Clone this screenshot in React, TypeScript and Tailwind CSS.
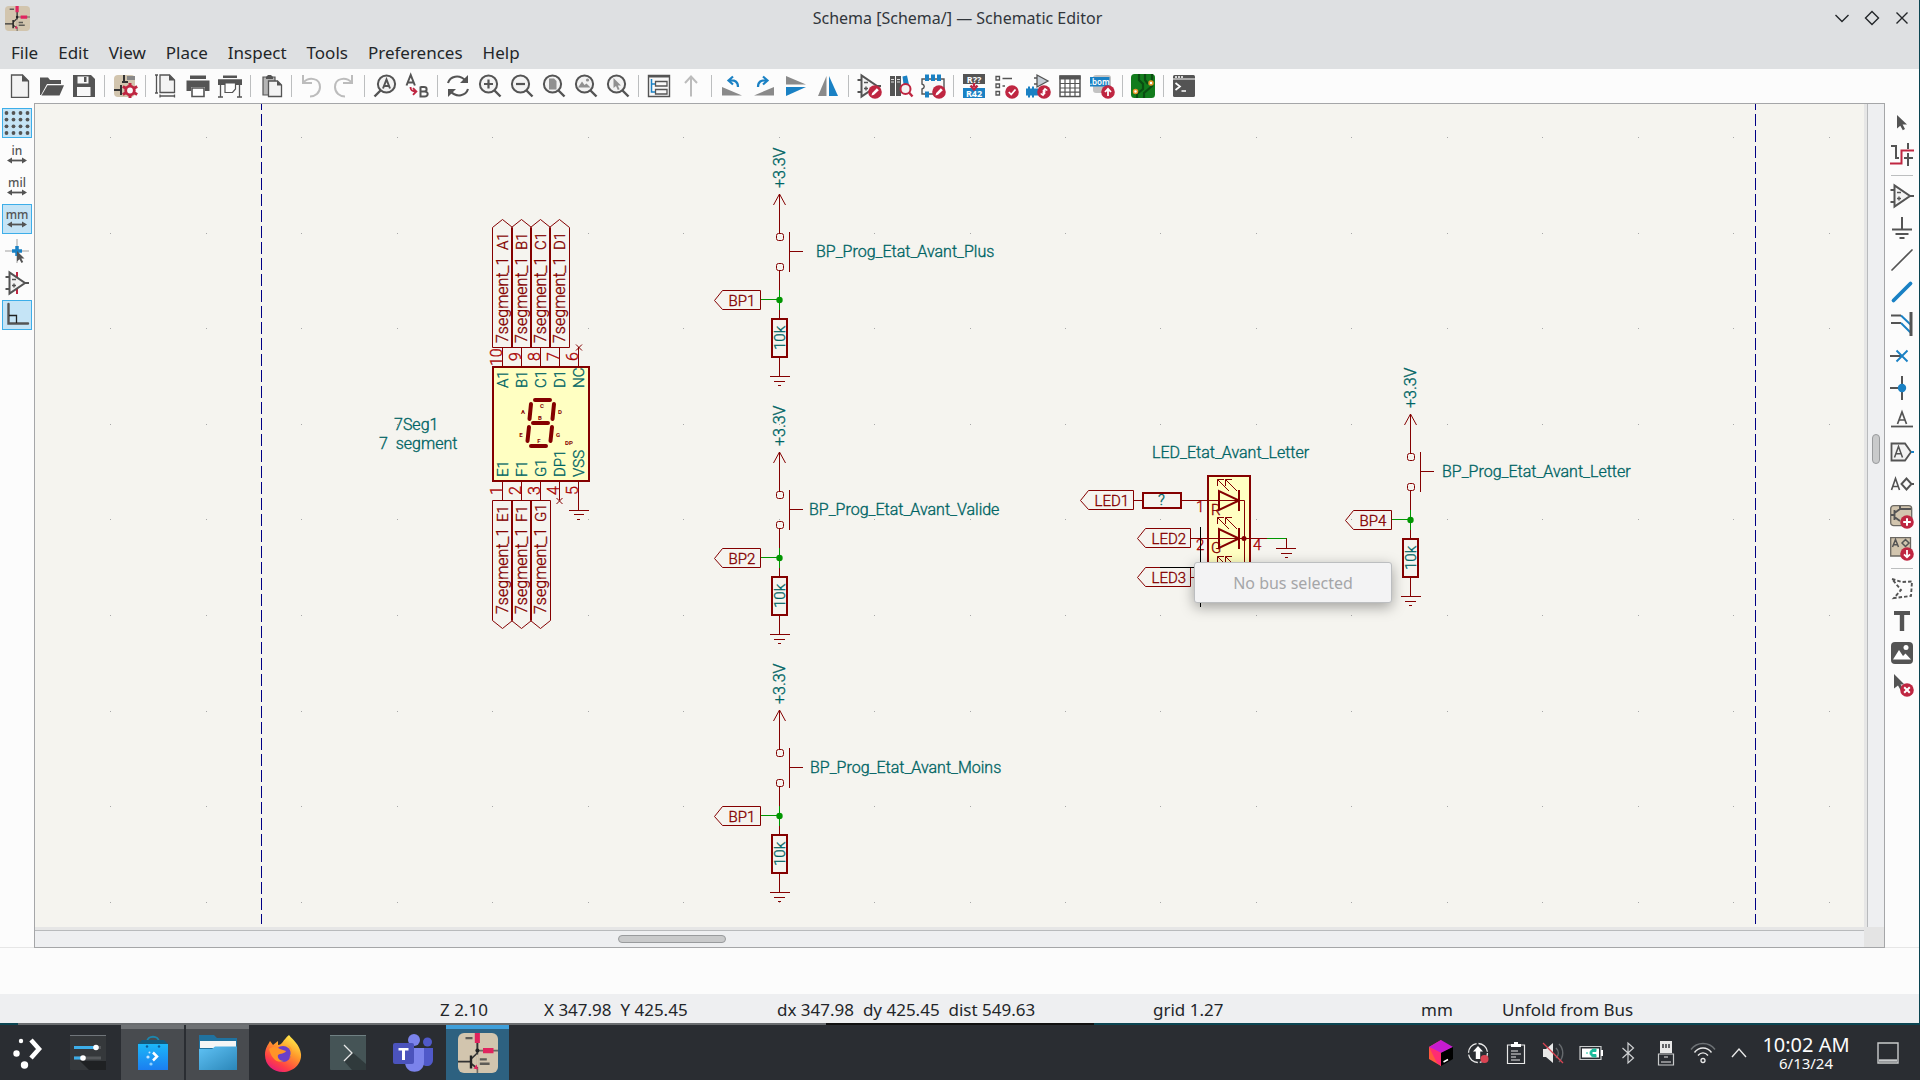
import React from "react";
import type { ReactNode } from "react";

const G = "#545454";
const B = "#1a81c4";
const R = "#bf2641";
const MAROON = "#840000";
const TEAL = "#006464";
const PIN = "#a90000";
const GREEN = "#009600";

type Item = { label: string; art: ReactNode; active?: boolean } | "sep";

function Art({ children, size = 24, box = 24 }: { children: ReactNode; size?: number; box?: number }) {
  return (
    <svg width={size} height={size} viewBox={`0 0 ${box} ${box}`} fill="none" className="block shrink-0 overflow-visible" aria-hidden="true">
      {children}
    </svg>
  );
}

function Magnifier({ children }: { children?: ReactNode }) {
  return (
    <Art>
      <circle cx="10.5" cy="10" r="8.6" fill="#f3f3f3" stroke={G} strokeWidth="2" />
      <path d="M16.5 16.5 22.5 22.5" stroke={G} strokeWidth="2.4" />
      {children}
    </Art>
  );
}

function Badge({ children, cx = 18, cy = 18 }: { children: ReactNode; cx?: number; cy?: number }) {
  return (
    <g transform={`translate(${cx} ${cy})`}>
      <circle r="6.8" fill={R} />
      {children}
    </g>
  );
}

const pencil = <path d="M-3.5 3.500-2.800 1 1.800-3.800 3.800-1.800-1 2.800Z" fill="#fff" />;

function AppGlyph() {
  return (
    <>
      <rect width="40" height="40" rx="6" fill="#d2c5ae" />
      <path d="M19.4 9V40M19.4 17.6H40" stroke="#6b6862" strokeWidth="1.6" />
      <path d="M19.4 9V20L13 26M0 28.6H13M13 30.5 19.4 35.5" stroke="#333" strokeWidth="1.7" />
      <path d="M19.4 21.8V34" stroke="#d2c5ae" strokeWidth="2.4" />
      <path d="M13 22.5V35.5" stroke="#222" strokeWidth="2.4" />
      <circle cx="19.4" cy="17.6" r="2" fill="#222" />
      <path d="M16.8 0H21.9V10H16.8ZM25 15H35.5V20.2H25ZM20.2 36.5 15.4 35.4 18.6 31.4Z" fill="#e0245e" />
      <path d="M7.5 4H14.5V6.3H7.5ZM21.8 25.3H28.8V27.6H21.8ZM21.8 29.6H31.6V32H21.8Z" fill="#5d5b56" />
    </>
  );
}

function OpAmp() {
  return (
    <>
      <path d="M4.5 1.5V22.5L20 12Z" fill="#f3f3f3" stroke={G} strokeWidth="2" />
      <path d="M0.5 6H4M0.5 18H4M20 12H24" stroke={G} strokeWidth="2" />
      <path d="M7 8.5H11M7 14.5H11M9 12.5V16.5" stroke={G} strokeWidth="1.4" />
    </>
  );
}

const topItems: Item[] = [
  { label: "New", art: <Art><path d="M3.5 1H14.5L20.5 7V23.3H3.5Z" fill="#f3f3f3" stroke={G} strokeWidth="1.3" /><path d="M14 .5 21 7.5H14Z" fill={G} /></Art> },
  { label: "Open", art: <Art><path d="M0 21V3.5H8L10 6H21V10H7L1 21Z" fill={G} /><path d="M1.5 21.5 7.5 11.2H24L19.5 21.5Z" fill={G} /></Art> },
  { label: "Save", art: <Art><path d="M1 1H19L23 5V23H1Z" fill={G} /><path d="M5.5 2.5H16.5V9.5H5.5ZM5 13H18.5V22H5Z" fill="#f8f8f8" /><path d="M12 3H14.5V8H12Z" fill={G} /></Art> },
  "sep",
  { label: "Schematic Setup", art: <Art><rect x="1" y="1" width="21" height="22" rx="4" fill="#d2c5ae" /><path d="M11 1V8M9 8H15M1 16H8M8 11V21" stroke="#333" strokeWidth="2" /><path d="M14 2H22V6H14Z" fill="#888" /><path d="M17 9V24M9.8 12.5 24.2 20.5M9.8 20.5 24.2 12.5" stroke={R} strokeWidth="3" /><circle cx="17" cy="16.5" r="4.3" fill="#f8f8f8" stroke={R} strokeWidth="2.8" /></Art> },
  "sep",
  { label: "Page Settings", art: <Art><path d="M6 1H15.5L20.500 6V18.500H6Z" fill="#f3f3f3" stroke={G} strokeWidth="1.3" /><path d="M15 .5 21 6.500H15Z" fill={G} /><path d="M2.500 1V19M1 1H4M1 19H4M6 22H20.500M6 20.500V23.500M20.500 20.500V23.500" stroke={G} strokeWidth="1.3" /></Art> },
  { label: "Print", art: <Art><path d="M4 1.5H20V5H4ZM0.5 6.5H23.5V17H19V13H5V17H.5Z" fill={G} /><path d="M6 14H18V22.5H6Z" fill="#fff" stroke={G} strokeWidth="1.6" /></Art> },
  { label: "Plot", art: <Art><path d="M5 1.5H19V4H5ZM0 5.2H24V11H0Z" fill={G} /><path d="M7 9H17.5V15L14.5 18.5H7Z" fill="#fff" stroke={G} strokeWidth="1.2" /><path d="M2.5 10V22.5M21.5 10V22.5M0 23H5M19 23H24" stroke={G} strokeWidth="1.3" /></Art> },
  "sep",
  { label: "Paste", art: <Art><path d="M4 3H16V21H4Z" fill="#b5b5b5" stroke={G} strokeWidth="1.2" /><path d="M7 3 9 1H12L14 3V5H7Z" fill={G} /><path d="M9.500 7H18.500L22.500 11V22.500H9.500Z" fill="#f3f3f3" stroke={G} strokeWidth="1.3" /><path d="M18 6.500 23 11.500H18Z" fill={G} /></Art> },
  "sep",
  { label: "Undo", art: <Art><path d="M3 1V9H12M3.500 8.500C9 2.500 20 4 20 13C20 19 15 22.500 10 22.500" stroke="#bcbcbc" strokeWidth="2" /></Art> },
  { label: "Redo", art: <Art><path d="M20 1V9H11M19.5 8.5C14 2.5 3 4 3 13C3 19 8 22.5 13 22.5" stroke="#bcbcbc" strokeWidth="2" /></Art> },
  "sep",
  { label: "Find", art: <Art><circle cx="13.5" cy="10" r="8.6" fill="#f3f3f3" stroke={G} strokeWidth="2" /><path d="M7.5 16.5 1.5 22.5" stroke={G} strokeWidth="2.4" /><path d="M10 14.5 13.5 5.5 17 14.5M11 12H16" stroke={G} strokeWidth="2" /></Art> },
  { label: "Find and Replace", art: <Art><path d="M1.5 11.5 5.7 1 9.9 11.5M3 8.5H8.5" stroke={G} strokeWidth="2" /><path d="M15.5 13H19C22.5 13 22.5 17.5 19 17.5H15.5M19.5 17.5C24 17.5 23.5 22.5 19.5 22.5H15.5V12.5" stroke={G} strokeWidth="2" /><path d="M5.5 13C5.5 16.5 7 17.5 11 17.5M8 14.2 11.3 17.5 8 20.8" stroke={R} strokeWidth="1.9" /></Art> },
  "sep",
  { label: "Refresh", art: <Art><path d="M2 9C4 2.5 13-.5 20 7M22 15C20 21.500 11 24.500 4 17" stroke={G} strokeWidth="2.1" /><path d="M22 1V9H14ZM2 23V15H10Z" fill={G} /></Art> },
  { label: "Zoom In", art: <Magnifier><path d="M6 10H15M10.500 5.500V14.500" stroke={G} strokeWidth="2.2" /></Magnifier> },
  { label: "Zoom Out", art: <Magnifier><path d="M6 10H15" stroke={G} strokeWidth="2.2" /></Magnifier> },
  { label: "Zoom to Fit", art: <Magnifier><path d="M7 4.500H12L14.500 7V15.500H7Z" fill="#909090" /></Magnifier> },
  { label: "Zoom to Objects", art: <Magnifier><path d="M4 13.500 8 7.500 10.500 11 12.500 9.500 16.500 13.500Z" fill="#909090" /><circle cx="13.500" cy="6" r="1.600" fill="#909090" /></Magnifier> },
  { label: "Zoom to Selection", art: <Magnifier><path d="M7.500 4V14L10 12 11.800 16 13.600 15.200 11.800 11.500H15Z" fill="#909090" /></Magnifier> },
  "sep",
  { label: "Hierarchy Navigator", art: <Art><path d="M1.500 1.500H22.500V22.500H1.500Z" fill="#f8f8f8" stroke={G} strokeWidth="1.400" /><path d="M1 1H23V3.500H1Z" fill={G} /><path d="M8.500 7.500H20V12H8.500ZM8.500 15.500H20V20H8.500Z" stroke={G} strokeWidth="1.300" /><path d="M4.500 5V18H8M4.500 10H8" stroke={B} strokeWidth="1.500" /></Art> },
  { label: "Leave Sheet", art: <Art><path d="M12 22.500V2.500M6 9 12 2.500 18 9" stroke="#bcbcbc" strokeWidth="2" /></Art> },
  "sep",
  { label: "Rotate Counterclockwise", art: <Art><path d="M2 13V21.500H22Z" fill="#8a8a8a" /><path d="M18 13C18 8 15 5.500 9 6.500M13 2.500 8.500 6.500 13 10.500" stroke={B} strokeWidth="2.200" /></Art> },
  { label: "Rotate Clockwise", art: <Art><path d="M22 13V21.500H2Z" fill="#8a8a8a" /><path d="M6 13C6 8 9 5.500 15 6.500M11 2.500 15.500 6.500 11 10.500" stroke={B} strokeWidth="2.200" /></Art> },
  { label: "Mirror Vertically", art: <Art><path d="M2 2V10.500H22Z" fill="#8a8a8a" /><path d="M2 22V13H22Z" fill={B} /></Art> },
  { label: "Mirror Horizontally", art: <Art><path d="M2 22H10.500V2Z" fill="#8a8a8a" /><path d="M22 22H13V2Z" fill={B} /></Art> },
  "sep",
  { label: "Symbol Editor", art: <Art><OpAmp /><Badge>{pencil}</Badge></Art> },
  { label: "Symbol Library Browser", art: <Art><path d="M1 2H6V22H1ZM7 2H12V22H7Z" fill={G} /><path d="M2 5.500H5M2 8H5M8 5.500H11M8 8H11" stroke="#ddd" strokeWidth="1" /><path d="M13.500 2.500 18 1.500 20.500 13 15 14Z" fill={B} /><circle cx="16.500" cy="15" r="5" fill="#f3f3f3" stroke={R} strokeWidth="2" /><path d="M20 18.500 23.500 22.500" stroke={R} strokeWidth="2.400" /></Art> },
  { label: "Footprint Editor", art: <Art><path d="M1 5H23V20H1V15C4 14 4 11 1 10Z" fill="#f8f8f8" stroke={G} strokeWidth="1.400" /><path d="M4 .5H8V7H4ZM10 .5H14V7H10ZM16 .5H20V7H16ZM4 17.500H8V23.500H4Z" fill={B} /><Badge>{pencil}</Badge></Art> },
  "sep",
  { label: "Annotate", art: <Art><path d="M1 0H23V10H1Z" fill={G} /><path d="M1 14H23V24H1Z" fill={B} /><path d="M12 9V13M8.500 11.500 12 15.500 15.500 11.500" stroke={R} strokeWidth="2.400" /><text x="12" y="8.500" textAnchor="middle" fontSize="9" fontWeight="700" fill="#fff">R??</text><text x="12" y="22.500" textAnchor="middle" fontSize="9" fontWeight="700" fill="#fff">R42</text></Art> },
  { label: "Electrical Rules Check", art: <Art><path d="M2 2.500H5.500V6H2ZM2 10H5.500V13.500H2ZM2 17.500H5.500V21H2ZM8.500 4.500H18M8.500 12H11" stroke={G} strokeWidth="1.300" /><Badge><path d="M-3.200 0-.8 2.500 3.500-2.500" stroke="#fff" strokeWidth="1.800" /></Badge></Art> },
  { label: "Assign Footprints", art: <Art><path d="M11 1V13L22 7Z" fill="#c5cdd5" stroke={G} strokeWidth="1.300" /><path d="M8 4H11M8 10H11" stroke={G} strokeWidth="1.300" /><path d="M0 14.500H12V21.500H0ZM2 12.500H4V23.500H2ZM6 12.500H8V23.500H6Z" fill={B} /><Badge><path d="M-3.300 1.500-1 3.300 1.200.5M3.300-1.500 1-3.300-1.200-.5M-1.500 1.500 1.500-1.500" stroke="#fff" strokeWidth="1.400" /></Badge></Art> },
  { label: "Symbol Fields Table", art: <Art><path d="M2 2H22V22.500H2Z" fill="#fff" stroke={G} strokeWidth="1.500" /><path d="M1.500 1.500H22.500V5.500H1.500Z" fill={G} /><path d="M7 5V22M12 5V22M17 5V22M2 9.500H22M2 14H22M2 18.200H22" stroke={G} strokeWidth="1.200" /></Art> },
  { label: "Generate Bill of Materials", art: <Art><rect x="3" y="1" width="18" height="18" rx="3" fill="#c3c3c3" /><path d="M0 3H19.500V12.500H0Z" fill={B} /><text x="9.700" y="10.500" textAnchor="middle" fontSize="8" fontWeight="600" fill="#fff">.bom</text><Badge><path d="M0 4V-3M-3 0 0-3.200 3 0" stroke="#fff" strokeWidth="1.800" /></Badge></Art> },
  "sep",
  { label: "Switch to PCB Editor", art: <Art><rect x="0" y="0" width="24" height="24" rx="3.500" fill="#127c1c" /><path d="M8 0V6L12 10V15L6 20V24M14 0V6L17 10M13 24V19L21 12V0" stroke="#0b4d12" strokeWidth="2.200" /><circle cx="4.500" cy="17.500" r="2" fill="#fff" stroke="#e8952a" strokeWidth="1.500" /><circle cx="20" cy="9" r="2" fill="#fff" stroke="#e8952a" strokeWidth="1.500" /></Art> },
  "sep",
  { label: "Scripting Console", art: <Art><rect x="1" y="1" width="22" height="22" rx="1.500" fill={G} /><path d="M1 5H23" stroke="#fff" strokeWidth="1" /><path d="M3 3H5M6 3H8M9 3H11" stroke="#fff" strokeWidth="1.300" /><path d="M3.500 9 8 12.500 3.500 16M9.500 17H14" stroke="#fff" strokeWidth="1.700" /></Art> },
];

function Unit({ name }: { name: string }) {
  return (
    <Art>
      <text x="12" y="12" textAnchor="middle" fontSize="12" fontWeight="500" fill={G}>{name}</text>
      <path d="M4 17.500H20" stroke={G} strokeWidth="1.800" />
      <path d="M2 17.500 7 14.500V20.500ZM22 17.500 17 14.500V20.500Z" fill={G} />
    </Art>
  );
}

const leftItems: Item[] = [
  {
    label: "Show Grid",
    active: true,
    art: (
      <Art>
        {[1.5, 8.5, 15.5, 22.5].flatMap((x) => [2, 8.600, 15.300, 22].map((y) => <circle key={`${x}-${y}`} cx={x} cy={y} r="1.900" fill={G} />))}
      </Art>
    ),
  },
  { label: "Inches", art: <Unit name="in" /> },
  { label: "Mils", art: <Unit name="mil" /> },
  { label: "Millimeters", active: true, art: <Unit name="mm" /> },
  { label: "Full-Window Crosshairs", art: <Art><path d="M0 12H24M12 0V24" stroke="#a0a0a0" strokeWidth="1" /><path d="M7 12H17M12 7V17" stroke={B} strokeWidth="3.500" /><path d="M12 12V22.500L14.500 20.300 16.500 24 18.200 23 16.300 19.600H19.500Z" fill={G} /></Art> },
  { label: "Show Hidden Pins", art: <Art><path d="M12 1V6M12 18V23" stroke={R} strokeWidth="2" /><OpAmp /></Art> },
  { label: "Orthogonal Lines", active: true, art: <Art><path d="M3.500 1V20.500H23" stroke={G} strokeWidth="2.400" strokeLinecap="round" /><path d="M4 12.500H11.500V20" stroke="#222" strokeWidth="1.300" /></Art> },
];

const rightItems: Item[] = [
  { label: "Select", art: <Art><path d="M7 4V17.500L10.300 14.700 12.800 19.200 15 18 12.600 13.600H17Z" fill={G} /></Art> },
  { label: "Highlight Net", art: <Art><path d="M1 3H6V15H9M18 0V6M14 15H23M18 10V23" stroke={G} strokeWidth="2" /><path d="M0 20.500H11.500V7.500H24" stroke={R} strokeWidth="2" /></Art> },
  "sep",
  { label: "Place Symbol", art: <Art><OpAmp /></Art> },
  { label: "Place Power", art: <Art><path d="M12 1V13M2 13.500H22M5.500 18H18.500M9.500 22H14.500" stroke={G} strokeWidth="2" /></Art> },
  { label: "Draw Wire", art: <Art><path d="M2 22 22 2" stroke={G} strokeWidth="1.700" strokeLinecap="round" /></Art> },
  { label: "Draw Bus", art: <Art><path d="M3.500 20.500 20.500 3.500" stroke={B} strokeWidth="3.800" strokeLinecap="round" /></Art> },
  { label: "Wire to Bus Entry", art: <Art><path d="M1 3.500H11M1 11H11" stroke={G} strokeWidth="2" /><path d="M11 3.500 21 13M11 11 21 21" stroke={B} strokeWidth="2" /><path d="M21 0V24" stroke={G} strokeWidth="3" /></Art> },
  { label: "No Connect", art: <Art><path d="M0 12H12" stroke={G} strokeWidth="2" /><path d="M6.500 6.500 17.500 17.500M6.500 17.500 17.500 6.500" stroke={B} strokeWidth="1.900" /></Art> },
  { label: "Junction", art: <Art><path d="M0 12H12M12 0V24" stroke={G} strokeWidth="2" /><circle cx="12" cy="12" r="4.200" fill={B} /></Art> },
  { label: "Net Label", art: <Art><path d="M7.500 16 12 4 16.500 16M9 12H15" stroke={G} strokeWidth="1.700" /><path d="M1 18.500H23" stroke={G} strokeWidth="1.800" /></Art> },
  { label: "Global Label", art: <Art><path d="M1.500 3.500H15L21 12 15 20.500H1.500Z" fill="#f3f3f3" stroke={G} strokeWidth="1.800" /><path d="M4.500 17.500 8.500 6.500 12.500 17.500M6 13.800H11" stroke={G} strokeWidth="1.500" /><path d="M21 12H24" stroke={B} strokeWidth="2" /></Art> },
  { label: "Hierarchical Label", art: <Art><path d="M1.500 18 5.500 6.500 9.500 18M3 14.500H8" stroke={G} strokeWidth="1.600" /><path d="M11.500 12 16.500 6.500 21.500 12 16.500 17.500ZM21.500 12H24" stroke={G} strokeWidth="1.900" /></Art> },
  { label: "Add Sheet", art: <Art><rect x=".7" y="1.700" width="21" height="20" rx="3" fill="#d2c5ae" stroke="#6b6862" strokeWidth="1.300" /><path d="M4.500 6V16M1 11H4.500M4.500 9 10 5V2M4.500 13 10 17M10 5H21" stroke={G} strokeWidth="1.900" /><Badge cx={17}><path d="M-3.800 0H3.800M0-3.800V3.800" stroke="#fff" strokeWidth="2" /></Badge></Art> },
  { label: "Import Sheet Pin", art: <Art><path d="M.7 1.700H20.500V20H.7Z" fill="#d2c5ae" stroke="#6b6862" strokeWidth="1.300" /><path d="M2.500 11 5.500 3.500 8.500 11M3.500 8.700H7.500M12 7 15.500 3.500 19 7 15.500 10.500Z" stroke={G} strokeWidth="1.500" /><Badge cx={17} cy={18}><path d="M0-4V3M-3 .3 0 3.300 3 .3" stroke="#fff" strokeWidth="1.800" /></Badge></Art> },
  "sep",
  { label: "Draw Lines", art: <Art><path d="M2 2 12 5 22 4.500 21 19 4 21 11 13 2 2" stroke={G} strokeWidth="1.900" strokeDasharray="3.500 2" /></Art> },
  { label: "Place Text", art: <Art><path d="M4 2H20V6H14.200V22H9.800V6H4Z" fill={G} /></Art> },
  { label: "Place Image", art: <Art><rect x="1" y="1" width="22" height="22" rx="4" fill={G} /><path d="M3 18.500 9 9 13 15 15.500 12.500 21 18.500Z" fill="#fff" /><circle cx="16" cy="6.500" r="2.500" fill="#fff" /></Art> },
  { label: "Delete", art: <Art><path d="M4 1V15.500L8 12.500 10.500 17 13 15.500 10.500 11.500H14.500Z" fill={G} /><Badge cx={17} cy={17}><path d="M-2.800-2.800 2.800 2.800M-2.800 2.800 2.800-2.800" stroke="#fff" strokeWidth="2" /></Badge></Art> },
];

function ToolButton({ item }: { item: Exclude<Item, "sep"> }) {
  return (
    <button
      type="button"
      aria-label={item.label}
      className={
        item.active
          ? "m-px flex size-[30px] shrink-0 items-center justify-center border border-[#3daee9] bg-[#c5e4f6]"
          : "m-px flex size-[30px] shrink-0 items-center justify-center border border-transparent"
      }
    >
      {item.art}
    </button>
  );
}

type LabelProps = { x: number; y: number; fill?: string; size?: number; children: ReactNode };

function H({ x, y, fill = TEAL, size = 16, children }: LabelProps) {
  return (
    <text x={x} y={y} fontSize={size} fill={fill} stroke={fill} strokeWidth="0.35">
      {children}
    </text>
  );
}

function V({ x, y, fill = TEAL, size = 16, children }: LabelProps) {
  return (
    <text transform={`translate(${x} ${y}) rotate(-90)`} fontSize={size} fill={fill} stroke={fill} strokeWidth="0.35">
      {children}
    </text>
  );
}

function Tag({ x, y, w, name }: { x: number; y: number; w: number; name: string }) {
  return (
    <g>
      <path d={`M${x} ${y}l8-10h${w - 8}v19h-${w - 8}Z`} stroke={MAROON} fill="none" />
      <H x={x + 14} y={y + 5} size={15} fill={MAROON}>{name}</H>
    </g>
  );
}

function PushButton({ dx, dy, tag, name, tx }: { dx: number; dy: number; tag: string; name: string; tx: number }) {
  return (
    <g transform={`translate(${dx} ${dy})`}>
      <V x={785} y={188}>+3.3V</V>
      <g stroke={MAROON} fill="none">
        <path d="M779.5 194V233M773.500 205 779.500 194 785.500 205M789.500 232V272M789.500 251.500H803M779.500 271V290M779.500 310V318M779.500 358V376" />
        <rect x="776.500" y="233.500" width="7" height="7" rx="2" />
        <rect x="776.500" y="263.500" width="7" height="7" rx="2" />
        <path d="M770 376.500H790M774 381.500H785M778 385.500H781" />
        <rect x="772" y="319" width="15" height="38" strokeWidth="2" />
      </g>
      <path d="M761 299.500H779.500M779.500 290V310" stroke={GREEN} />
      <circle cx="779.500" cy="300" r="3.200" fill={GREEN} />
      <V x={785} y={350} size={15}>10k</V>
      <Tag x={714.5} y={300.5} w={46} name={tag} />
      <H x={tx} y={257}>{name}</H>
    </g>
  );
}

function Diode({ dy }: { dy: number }) {
  return (
    <g transform={`translate(0 ${dy})`} stroke={MAROON} fill="none">
      <path d="M1229 491 1217.500 479.500M1237 491 1225.500 479.500M1217.500 486V479.500H1224M1225.500 486V479.500H1232" />
      <path d="M1219 491V510L1239 500.500ZM1239 490V511" strokeWidth="2" />
    </g>
  );
}

const topPins = [
  { x: 502.500, n: "10", name: "A1" },
  { x: 521.500, n: "9", name: "B1" },
  { x: 540.500, n: "8", name: "C1" },
  { x: 559.500, n: "7", name: "D1" },
  { x: 578.500, n: "6", name: "NC" },
];
const bottomPins = [
  { x: 502.500, n: "1", name: "E1" },
  { x: 521.500, n: "2", name: "F1" },
  { x: 540.500, n: "3", name: "G1" },
  { x: 559.500, n: "4", name: "DP1" },
  { x: 578.500, n: "5", name: "VSS" },
];
const segmentMarks: [string, number, number][] = [
  ["A", 523, 414], ["C", 542, 408], ["D", 560, 414], ["B", 540, 420],
  ["E", 521, 437], ["G", 558, 437], ["F", 539, 443], ["DP", 569, 445],
];

function SevenSegment() {
  return (
    <g>
      <rect x="493" y="367" width="96" height="114" fill="#ffffc2" stroke={MAROON} strokeWidth="2" />
      {topPins.map((p, i) => (
        <g key={p.n}>
          <path d={`M${p.x} 347V366`} stroke={MAROON} />
          <V x={p.x - 1} y={i === 0 ? 366 : 361} fill={PIN}>{p.n}</V>
          <V x={p.x + 5} y={388} size={15}>{p.name}</V>
          {i < 4 && (
            <>
              <path d={`M${p.x - 10} 347.500V227.500L${p.x} 219.500 ${p.x + 10} 227.500V347.500Z`} stroke={MAROON} fill="none" />
              <V x={p.x + 5} y={343} fill={MAROON}>7segment_1</V>
              <V x={p.x + 5} y={250} fill={MAROON} size={15}>{p.name}</V>
            </>
          )}
        </g>
      ))}
      {bottomPins.map((p, i) => (
        <g key={p.n}>
          <path d={`M${p.x} 482V500`} stroke={MAROON} />
          <V x={p.x - 1} y={495} fill={PIN}>{p.n}</V>
          <V x={p.x + 5} y={477} size={15}>{p.name}</V>
          {i < 3 && (
            <>
              <path d={`M${p.x - 10} 500.500V620.500L${p.x} 628.500 ${p.x + 10} 620.500V500.500Z`} stroke={MAROON} fill="none" />
              <V x={p.x + 5} y={614} fill={MAROON}>7segment_1</V>
              <V x={p.x + 5} y={522} fill={MAROON} size={15}>{p.name}</V>
            </>
          )}
        </g>
      ))}
      <path d="M576 344.500 582 350.500M576 350.500 582 344.500M556.500 498 562.500 504M556.500 504 562.500 498M578.500 500V510M569 510.500H589M574 514.500H584M577 519.500H580" stroke={MAROON} />
      <g stroke={MAROON} strokeWidth="4" strokeLinecap="round">
        <path d="M535 400H550M533 423H548M531 446H546M531 404 529.500 419M554 404 552.500 419M529 427 527.500 441M552 427 550.500 441" />
      </g>
      {segmentMarks.map(([t, x, y]) => (
        <text key={t} x={x} y={y} fontSize="6" fontWeight="700" textAnchor="middle" fill={MAROON}>{t}</text>
      ))}
      <H x={394} y={430}>7Seg1</H>
      <H x={379} y={449}>7&nbsp; segment</H>
    </g>
  );
}

function LedArray() {
  return (
    <g>
      <rect x="1208" y="476" width="42" height="120" fill="#ffffc2" stroke={MAROON} strokeWidth="2" />
      <Diode dy={0} />
      <Diode dy={38} />
      <Diode dy={77} />
      <g stroke={MAROON} fill="none">
        <path d="M1134 500.500H1143M1182 500.500H1244.500V596M1191 538.500H1267M1191 577.500H1208M1286.500 538V548M1276 548.500H1296M1281 553.500H1292M1285 557.500H1288" />
        <rect x="1143" y="493" width="38" height="15" strokeWidth="2" />
      </g>
      <circle cx="1244" cy="538.500" r="2.500" fill={MAROON} />
      <path d="M1267 538.500H1286.500" stroke={GREEN} />
      <H x={1196} y={512} size={15} fill={PIN}>1</H>
      <H x={1196} y={550} size={15} fill={PIN}>2</H>
      <H x={1253} y={550} size={15} fill={PIN}>4</H>
      <H x={1211} y={515} size={15} fill={MAROON}>R</H>
      <H x={1211} y={553} size={15} fill={MAROON}>G</H>
      <H x={1158} y={505} size={15}>?</H>
      <H x={1152} y={458}>LED_Etat_Avant_Letter</H>
      <Tag x={1080.500} y={500.500} w={53} name="LED1" />
      <Tag x={1137.500} y={538.500} w={53} name="LED2" />
      <Tag x={1137.500} y={577.500} w={53} name="LED3" />
      <path d="M1200.500 527V607M1160 567.500H1240" stroke="#000" />
    </g>
  );
}

const gridX = Array.from({ length: 30 }, (_, i) => Math.round(15 + i * 95.45));
const gridY = Array.from({ length: 14 }, (_, i) => Math.round(137 + i * 95.600));

function Schematic() {
  return (
    <svg className="absolute inset-0 size-full font-['Roboto',sans-serif] font-light" role="img" aria-label="Schematic sheet">
      <g transform="translate(-35 -104)">
        {gridX.flatMap((x) => gridY.map((y) => <rect key={`${x}-${y}`} x={x} y={y} width="1" height="1" fill="#a8a8a8" />))}
        <path d="M261.500 104V924M1755.500 104V924" stroke="#000084" strokeDasharray="12 4" strokeDashoffset="6" />
        <SevenSegment />
        <PushButton dx={0} dy={0} tag="BP1" name="BP_Prog_Etat_Avant_Plus" tx={816} />
        <PushButton dx={0} dy={258} tag="BP2" name="BP_Prog_Etat_Avant_Valide" tx={809} />
        <PushButton dx={0} dy={516} tag="BP1" name="BP_Prog_Etat_Avant_Moins" tx={810} />
        <PushButton dx={631} dy={220} tag="BP4" name="BP_Prog_Etat_Avant_Letter" tx={811} />
        <LedArray />
      </g>
    </svg>
  );
}

const tasks: { label: string; tone: string; art: ReactNode }[] = [
  { label: "System Settings", tone: "", art: <Art size={36} box={36}><rect x="0" y="0" width="36" height="35" rx="1" fill="#35383b" /><path d="M0 .5H36" stroke="#70757a" /><path d="M10 26 36 26V35H19Z" fill="#1f2123" /><path d="M4 12.500H31M4 23H31" stroke="#55585b" strokeWidth="3" /><path d="M4 12.500H25M4 23H13" stroke="#3daee9" strokeWidth="3" /><circle cx="26" cy="12.500" r="2.800" fill="#fff" /><circle cx="13" cy="23" r="2.800" fill="#fff" /></Art> },
  { label: "Discover", tone: "open", art: <Art size={36} box={36}><path d="M12 11V7C12 0 24 0 24 7V11" stroke="#1c86ad" strokeWidth="1.800" /><path d="M3 9H33V35H3Z" fill="url(#store)" /><path d="M3 9 7 5H29L33 9Z" fill="#145a7d" /><circle cx="12" cy="11.500" r="1.200" fill="#0c5e9b" /><circle cx="24" cy="11.500" r="1.200" fill="#0c5e9b" /><path d="M18 17.500 22 21.500 18 25.500" stroke="#fff" strokeWidth="2.500" /><circle cx="13" cy="22" r="1.600" fill="#c5e5ff" /><circle cx="14.500" cy="17.500" r="1" fill="#c5e5ff" /><circle cx="16" cy="29" r="1.600" fill="#8fd0ff" /><defs><linearGradient id="store" x1="0" y1="0" x2="0" y2="1"><stop stopColor="#1cb7f8" /><stop offset="1" stopColor="#1b7ef0" /></linearGradient></defs></Art> },
  { label: "Dolphin", tone: "open", art: <Art size={38} box={38}><path d="M0 1H15L18 4H38V20H0Z" fill="#20729f" /><path d="M1 7H37V14H1Z" fill="#f5f5f5" /><path d="M0 15H13L16 12.500H38V36H0Z" fill="url(#folder)" /><defs><linearGradient id="folder" x1="0" y1="0" x2="1" y2="1"><stop stopColor="#5fc2f5" /><stop offset="1" stopColor="#2b86b8" /></linearGradient></defs></Art> },
  { label: "Firefox", tone: "", art: <Art size={36} box={36}><path d="M24 0C28 5 35 10 36 19C37 29 28 37 18 37C8 37 0 30 0 20C0 13 3 10 5 6L8 10L13 6L13 10C17 10 18 5 24 0Z" fill="url(#fx)" /><circle cx="18" cy="19" r="8" fill="#6b3fc9" /><path d="M22 10C26 13 27 19 24 23C29 19 28 12 22 10Z" fill="#ff9d2e" /><path d="M4 14C8 11 12 12 15 14L21 16C20 19 15 18 13 20C12 23 15 26 19 26C11 29 6 22 4 14Z" fill="#ff9428" /><defs><linearGradient id="fx" x1=".8" y1="0" x2=".2" y2="1"><stop stopColor="#fff44f" /><stop offset=".4" stopColor="#ff9a2b" /><stop offset=".75" stopColor="#ff4045" /><stop offset="1" stopColor="#e31587" /></linearGradient></defs></Art> },
  { label: "Konsole", tone: "", art: <Art size={36} box={36}><rect width="36" height="35" rx="1" fill="#455456" /><path d="M22 17 36 29V35H22L14 26Z" fill="#303a3c" /><path d="M0 .5H36" stroke="#708083" /><path d="M14 10 22 18 14 26" stroke="#e8e8e8" strokeWidth="1.300" /></Art> },
  { label: "Teams", tone: "", art: <Art size={40} box={40}><circle cx="21" cy="7" r="6" fill="#7b83eb" /><circle cx="34.500" cy="9" r="4.500" fill="#5059c9" /><path d="M29 15H40V27C40 33 33 35 29 31Z" fill="#5059c9" /><path d="M12 15H31V29C31 42 12 42 12 29Z" fill="#7b83eb" /><rect x="0" y="10" width="21" height="21" rx="2" fill="#4b53bc" /><path d="M5.500 15H15.500V17.500H12V27H9V17.500H5.500Z" fill="#fff" /></Art> },
  { label: "Schematic Editor", tone: "active", art: <Art size={40} box={40}><AppGlyph /></Art> },
];

const tray: { label: string; art: ReactNode }[] = [
  { label: "JetBrains Toolbox", art: <Art size={26} box={26}><path d="M13 0 1 7V19L13 26V13Z" fill="#ff5a3c" /><path d="M1 7 13 0 25 7 13 13Z" fill="#c71ccf" /><path d="M1 7 13 13V26L9 23Z" fill="#ff2c72" /><path d="M25 7V19L13 26V13Z" fill="#000" /><path d="M15.500 22 20 19.500" stroke="#fff" strokeWidth="1.500" /></Art> },
  { label: "Updates", art: <Art size={22} box={22}><circle cx="11" cy="11" r="9.500" stroke="#e8e8e8" strokeWidth="1.300" strokeDasharray="13 2" /><path d="M11 4 16 9.500H13.200V17H8.800V9.500H6Z" fill="#fff" /><circle cx="17.500" cy="17" r="4" fill="#da4453" /></Art> },
  { label: "Clipboard", art: <Art size={22} box={22}><path d="M2.500 3H19.500V21.500H2.500Z" stroke="#e8e8e8" strokeWidth="1.200" /><path d="M6 2H9V0H13V2H16V5H6Z" fill="#fff" /><path d="M6 9H13M6 12H16M6 15H11M6 18H15" stroke="#e8e8e8" /></Art> },
  { label: "Audio Volume", art: <Art size={22} box={22}><path d="M1 7H4L11 1V21L4 15H1Z" fill="#e8e8e8" /><path d="M14 6C17 9 17 13 14 16M17 2C22 7 22 15 17 20" stroke="#666a6e" strokeWidth="1.400" /><path d="M1 1 21 21" stroke="#da4453" strokeWidth="1.200" /></Art> },
  { label: "Battery", art: <Art size={24} box={24}><path d="M1 5.500H22V18.500H1Z" stroke="#c9cbcc" strokeWidth="1.200" /><path d="M3 7.500H20V16.500H3ZM22 9H24V15H22Z" fill="#fff" /><path d="M7 12H9M17 8C9 7 9 17 17 16V13.500H13V10.500H17Z" fill="#1abc9c" stroke="#1abc9c" /></Art> },
  { label: "Bluetooth", art: <Art size={22} box={22}><path d="M5.500 6 16.500 16 11 21V1L16.500 6 5.500 16" stroke="#d0d2d4" strokeWidth="1.200" /></Art> },
  { label: "Removable Devices", art: <Art size={26} box={26}><path d="M7 1H19V13H7Z" fill="#e8e8e8" /><path d="M10 4V8M13 4V8M16 4V8" stroke="#2a2d32" strokeWidth="1.400" /><path d="M5.500 14H20.500V25H5.500Z" stroke="#c9cbcc" strokeWidth="1.200" /><path d="M8 22H18M11 17H15" stroke="#e8e8e8" /></Art> },
  { label: "Networks", art: <Art size={26} box={26}><path d="M1 9.500C7 1.500 19 1.500 25 9.500" stroke="#6d7175" strokeWidth="1.400" /><path d="M4.500 12.500C9 6.500 17 6.500 21.500 12.500M8 15.500C11 12 15 12 18 15.500" stroke="#e8e8e8" strokeWidth="1.400" /><circle cx="13" cy="20.500" r="2" stroke="#e8e8e8" strokeWidth="1.300" /></Art> },
];

export default function App() {
  return (
    <div className="flex h-screen w-full flex-col overflow-hidden bg-[#fcfcfc] font-['Noto_Sans',sans-serif] text-base text-[#232629]">
      <div className="flex min-h-0 flex-1 flex-col border-r border-[#0b4552]">
        <header className="shrink-0 bg-[#dee0e2]">
          <div className="flex h-9 items-center justify-between pr-[9px] pl-[5px]">
            <div className="flex w-28"><Art size={25} box={40}><AppGlyph /></Art></div>
            <h1 className="text-[#31363b]">Schema [Schema/] — Schematic Editor</h1>
            <div className="flex w-28 justify-end gap-[14px]">
              <button type="button" aria-label="Minimize"><Art size={16} box={16}><path d="M1.500 5 8 11.500 14.500 5" stroke="#232629" strokeWidth="1.400" /></Art></button>
              <button type="button" aria-label="Maximize"><Art size={16} box={16}><path d="M8 1.500 14.500 8 8 14.500 1.500 8Z" stroke="#232629" strokeWidth="1.400" /></Art></button>
              <button type="button" aria-label="Close"><Art size={16} box={16}><path d="M2.500 2.500 13.500 13.500M13.500 2.500 2.500 13.500" stroke="#232629" strokeWidth="1.400" /></Art></button>
            </div>
          </div>
          <nav className="flex h-[33px] items-center pl-px text-[17px]">
            {["File", "Edit", "View", "Place", "Inspect", "Tools", "Preferences", "Help"].map((m) => (
              <button key={m} type="button" className="px-[10px]">{m}</button>
            ))}
          </nav>
        </header>

        <div role="toolbar" aria-label="Main" className="flex h-[34px] shrink-0 items-center pl-1">
          {topItems.map((it, i) =>
            it === "sep" ? <div key={i} className="mx-1 h-[22px] w-px shrink-0 bg-[#bcbebf]" /> : <ToolButton key={i} item={it} />
          )}
        </div>

        <main className="flex min-h-0 flex-1">
          <div role="toolbar" aria-label="Display options" className="flex w-[34px] shrink-0 flex-col items-start border-b border-[#e6e6e6] pt-1 pl-px">
            {leftItems.map((it, i) => (it === "sep" ? null : <ToolButton key={i} item={it} />))}
          </div>

          <div className="flex min-w-0 flex-1 flex-col border border-[#a5a6a8]">
            <div className="flex min-h-0 flex-1">
              <div className="relative min-w-0 flex-1 overflow-hidden bg-[#f5f4ef]">
                <Schematic />
                <div role="menu" className="absolute top-[458px] left-[1159px] flex h-[41px] w-[198px] items-center justify-center rounded-[3px] border border-[#bcbec0] bg-[#f3f3f4] shadow-[0_4px_14px_rgba(0,0,0,0.35)]">
                  <button type="button" role="menuitem" disabled className="text-[#a5a6a8]">No bus selected</button>
                </div>
              </div>
              <div className="w-[3px] shrink-0 bg-[#e6e6e6]" />
              <div className="flex w-[17px] shrink-0 flex-col items-center border-l border-[#b8babc] bg-[#eeeff1] pt-[330px]">
                <div className="h-[30px] w-2 rounded-full border border-[#999b9d] bg-[#c9cacb]" />
              </div>
            </div>
            <div className="flex h-5 shrink-0">
              <div className="flex flex-1 flex-col">
                <div className="h-[3px] bg-[#e6e6e6]" />
                <div className="flex flex-1 items-center border-t border-[#b8babc] bg-[#eeeff1] pl-[583px]">
                  <div className="h-2 w-[108px] rounded-full border border-[#999b9d] bg-[#c9cacb]" />
                </div>
              </div>
              <div className="w-5 bg-[#e4e4e4]" />
            </div>
          </div>

          <div role="toolbar" aria-label="Drawing tools" className="flex w-[34px] shrink-0 flex-col items-center border-b border-[#e6e6e6] pt-1">
            {rightItems.map((it, i) =>
              it === "sep" ? <div key={i} className="my-1 h-px w-[22px] shrink-0 bg-[#bcbebf]" /> : <ToolButton key={i} item={it} />
            )}
          </div>
        </main>

        <div className="h-[46px] shrink-0" />

        <footer className="flex h-[29px] shrink-0 items-center bg-[#eeeff1] pt-[2px] pl-[440px] text-[17px] whitespace-pre">
          <span className="w-[104px]">Z 2.10</span>
          <span className="w-[233px]">X 347.98  Y 425.45</span>
          <span className="w-[376px]">dx 347.98  dy 425.45  dist 549.63</span>
          <span className="w-[268px]">grid 1.27</span>
          <span className="w-[81px]">mm</span>
          <span>Unfold from Bus</span>
        </footer>
      </div>

      <div className="h-[2px] shrink-0 bg-[linear-gradient(90deg,#0b4552_0,#0b4552_18px,#6a6d70_18px,#6a6d70_43%,#111_43%,#111_57%,#0b4552_57%)]" />

      <div className="flex h-[55px] shrink-0 items-center bg-[#2a2d32] text-[#fcfcfc]">
        <button type="button" aria-label="Application Launcher" className="flex h-full w-14 items-center justify-center">
          <Art size={32} box={32}>
            <path d="M19 3 27 12 19 21" stroke="#fff" strokeWidth="4.500" />
            <circle cx="9" cy="4" r="2.200" fill="#fff" /><circle cx="4.500" cy="16.500" r="3.200" fill="#fff" /><circle cx="12.500" cy="28" r="3.700" fill="#fff" />
          </Art>
        </button>
        <div className="flex h-full flex-1 gap-[2px]">
          {tasks.map((t) => (
            <button
              key={t.label}
              type="button"
              aria-label={t.label}
              className={
                t.tone === "active"
                  ? "flex w-[63px] items-center justify-center border-t-4 border-[#3f9fda] bg-[#2d6180] pb-1"
                  : t.tone === "open"
                    ? "flex w-[63px] items-center justify-center border-t-4 border-[#6e7174] bg-[#484b4f] pb-1"
                    : "flex w-[63px] items-center justify-center border-t-4 border-transparent pb-1"
              }
            >
              {t.art}
            </button>
          ))}
        </div>
        <div className="flex w-[300px] items-center">
          {tray.map((t) => (
            <button key={t.label} type="button" aria-label={t.label} className="flex h-10 flex-1 items-center justify-center">{t.art}</button>
          ))}
        </div>
        <button type="button" aria-label="Show hidden icons" className="flex h-10 w-[34px] items-center justify-center">
          <Art size={18} box={18}><path d="M2 13 9 5 16 13" stroke="#e8e8e8" strokeWidth="1.400" /></Art>
        </button>
        <button type="button" className="flex w-[100px] flex-col items-center">
          <span className="text-[20px] leading-[20px]">10:02 AM</span>
          <span className="text-[15px] leading-4">6/13/24</span>
        </button>
        <button type="button" aria-label="Show Desktop" className="flex w-16 items-center justify-center">
          <Art size={22} box={22}><path d="M1 1H21V21H1Z" stroke="#c9cbcc" strokeWidth="1.400" /><path d="M2 18.500H20" stroke="#c9cbcc" strokeWidth="2.400" /></Art>
        </button>
      </div>
    </div>
  );
}
